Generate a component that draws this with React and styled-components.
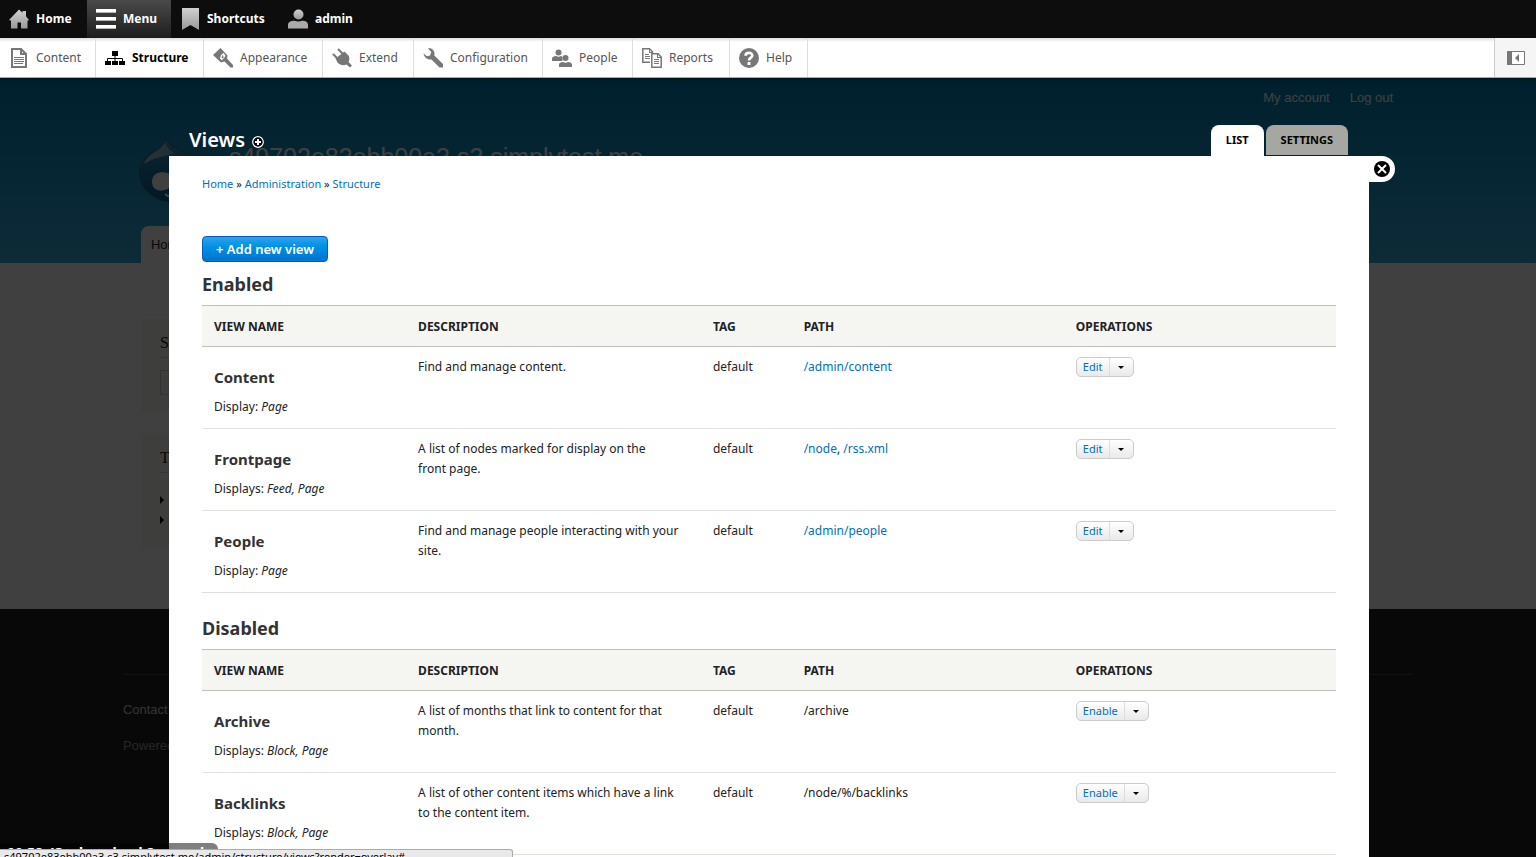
import React from "react";
import styled, { createGlobalStyle } from "styled-components";

const GlobalStyle = createGlobalStyle`
  * {
    box-sizing: border-box;
  }
  body {
    margin: 0;
    overflow: hidden;
    font-family: "Noto Sans", "Open Sans", sans-serif;
    font-size: 12px;
    color: #222;
  }
  a {
    color: #0071b3;
    text-decoration: none;
  }
  h1, h2, h3, p, ul {
    margin: 0;
    padding: 0;
  }
  button {
    font-family: inherit;
    cursor: pointer;
  }
`;

const enabledViews = [
  { name: "Content", label: "Display:", displays: "Page", description: "Find and manage content.", paths: ["/admin/content"] },
  { name: "Frontpage", label: "Displays:", displays: "Feed, Page", description: "A list of nodes marked for display on the front\u00a0page.", paths: ["/node", "/rss.xml"] },
  { name: "People", label: "Display:", displays: "Page", description: "Find and manage people interacting with your site.", paths: ["/admin/people"] },
];

const disabledViews = [
  { name: "Archive", label: "Displays:", displays: "Block, Page", description: "A list of months that link to content for that month.", text: "/archive" },
  { name: "Backlinks", label: "Displays:", displays: "Block, Page", description: "A list of other content items which have a link to the content item.", text: "/node/%/backlinks" },
];

const bar = [
  { label: "Home", icon: HomeIcon, width: 87 },
  { label: "Menu", icon: MenuIcon, width: 84, active: true },
  { label: "Shortcuts", icon: BookmarkIcon, width: 108 },
  { label: "admin", icon: UserIcon, width: 90 },
];

const tray = [
  { label: "Content", icon: ContentIcon, width: 96 },
  { label: "Structure", icon: StructureIcon, width: 108, active: true },
  { label: "Appearance", icon: BrushIcon, width: 119 },
  { label: "Extend", icon: PlugIcon, width: 91 },
  { label: "Configuration", icon: WrenchIcon, width: 129 },
  { label: "People", icon: PeopleIcon, width: 90 },
  { label: "Reports", icon: ReportsIcon, width: 97 },
  { label: "Help", icon: HelpIcon, width: 78 },
];

function HomeIcon() {
  return (
    <svg width="20" height="20" viewBox="0 0 20 20">
      <path fill="url(#barGrey)" d="M10 0.5 L13.5 3.8 V2 H17 V7.2 L20 11 L18.5 11.8 V19.5 H12 V13.5 H8.5 V19.5 H2 V11.8 L0 11 Z" />
    </svg>
  );
}

function MenuIcon() {
  return (
    <svg width="20" height="20" viewBox="0 0 20 20">
      <path fill="#fff" d="M0 0h20v4H0zM0 8h20v4H0zM0 16h20v4H0z" />
      <path fill="#b5b5b5" d="M0 3h20v1H0zM0 11h20v1H0zM0 19h20v1H0z" />
    </svg>
  );
}

function BookmarkIcon() {
  return (
    <svg width="20" height="22" viewBox="0 0 20 22">
      <path fill="url(#barGrey)" d="M2 0H19V22L10.500 17L2 22Z" />
    </svg>
  );
}

function UserIcon() {
  return (
    <svg width="20" height="20" viewBox="0 0 20 20">
      <circle fill="url(#barGrey)" cx="10.500" cy="5.500" r="5" />
      <path fill="#aaa" d="M0 19.500V16C0 13 3 11.800 6.500 11.800C9 12.800 12 12.800 14 11.800C17.500 11.800 20 13 20 16V19.500Z" />
    </svg>
  );
}

function ContentIcon() {
  return (
    <svg width="20" height="20" viewBox="0 0 20 20">
      <path fill="none" stroke="#777" strokeWidth="2" d="M3 1H12L17 6V19H3Z" />
      <path fill="#777" d="M11 1h2v4h4v2h-6zM5 9h10v1H5zM5 11h10v1H5zM5 13h10v1H5zM5 15h9v1H5z" />
    </svg>
  );
}

function StructureIcon() {
  return (
    <svg width="20" height="20" viewBox="0 0 20 20">
      <path fill="#000" d="M7 3h6v5H7zM0 13h6v4H0zM7 13h6v4H7zM14 13h6v4h-6z" />
      <path fill="none" stroke="#000" d="M10 8V13M2.500 13V10.500H17.500V13" />
    </svg>
  );
}

function BrushIcon() {
  return (
    <svg width="20" height="20" viewBox="0 0 20 20">
      <path fill="#777" d="M0 7L7.500 0L14.500 7.500L14 10.500L20 17V19.500H17.500L11.500 13.500L8 14.500Z" />
      <path fill="#fff" d="M7 10.500L8 7L10.500 5L12.500 7.500L11.500 9.500L8.800 12.200Z" />
      <path fill="#777" d="M8.500 9.500L10 6.500L10.500 9.500L9.500 10.500Z" />
    </svg>
  );
}

function PlugIcon() {
  return (
    <svg width="20" height="20" viewBox="0 0 20 20">
      <path fill="#777" d="M3.500 10.500L12.500 3.500L16.500 7.500C17.800 9.500 17.500 12 16.500 14L20 17.500L18 19.500L14.500 16.500C11 18 8 17 5.500 14.500Z" />
      <path stroke="#777" strokeWidth="2" strokeLinecap="round" d="M6.500 1.500L12 7M1.500 6.500L7 12" />
    </svg>
  );
}

function WrenchIcon() {
  return (
    <svg width="20" height="20" viewBox="0 0 20 20">
      <path fill="#777" d="M5 0.500C8 -0.200 11.500 2 11.500 5.500L11.300 7.500L20 16V19.500H16.500L8.500 11.500C5 12 1 9.500 0.500 5.500L4 8.300L7 7.500L8.300 4Z" />
    </svg>
  );
}

function PeopleIcon() {
  return (
    <svg width="20" height="20" viewBox="0 0 20 20">
      <circle fill="#777" cx="6.500" cy="4.500" r="3" />
      <path fill="#777" d="M0 13V10.500C0 9 2 8.200 4 8C6 9 7.500 9 9 8L10.500 9V13Z" />
      <circle fill="#777" cx="13.500" cy="10" r="3" />
      <path fill="#777" d="M7 19V16.500C7 15 9 14.200 11 14C13 15 14.500 15 16 14C18 14.200 20 15 20 16.500V19Z" />
    </svg>
  );
}

function ReportsIcon() {
  return (
    <svg width="20" height="20" viewBox="0 0 20 20">
      <path fill="none" stroke="#777" strokeWidth="1.500" d="M8 14.200H0.800V0.800H7.500L11.200 4.500" />
      <path fill="#777" d="M7 1h1v3h3v1H7zM3 6h4v1H3zM3 8h5v1H3zM3 10h5v1H3z" />
      <path fill="#fff" stroke="#777" strokeWidth="1.500" d="M9.800 5.800H16L19.200 9V19.200H9.800Z" />
      <path fill="#777" d="M15 6h1v3h3v1h-4zM12 11h5v1h-5zM12 13h5v1h-5zM12 15h5v1h-5z" />
    </svg>
  );
}

function HelpIcon() {
  return (
    <svg width="20" height="20" viewBox="0 0 20 20">
      <circle fill="#777" cx="10" cy="10" r="10" />
      <path fill="none" stroke="#fff" strokeWidth="2.600" d="M6.500 7.800C6.500 4 13.300 4 13.300 7.500C13.300 9.800 10 9.500 10 12.500" />
      <path fill="#fff" d="M8.500 14h3v3h-3z" />
    </svg>
  );
}

function Druplicon() {
  return (
    <svg width="64" height="73" viewBox="0 0 64 73">
      <defs>
        <linearGradient id="drop" x1="0" y1="0" x2="0" y2="1">
          <stop offset="0" stopColor="#4a9cc4" />
          <stop offset="0.500" stopColor="#1a78aa" />
          <stop offset="1" stopColor="#0a6090" />
        </linearGradient>
        <linearGradient id="shine" x1="1" y1="0" x2="0" y2="1">
          <stop offset="0" stopColor="#fff" stopOpacity="0.300" />
          <stop offset="1" stopColor="#fff" stopOpacity="0.600" />
        </linearGradient>
      </defs>
      <path fill="url(#drop)" stroke="#2a6c90" d="M27 1C30 11 43 12 52 20C72 38 62 65 34 65C8 65 -8 40 5 22C12 13 24 12 27 1Z" />
      <path fill="url(#shine)" d="M26 5C29 13 32 14 36 16C26 20 14 20 5 27C9 16 23 14 26 5Z" />
      <path fill="#fff" d="M13 45C13 33 28 33 35 40C41 36 52 34 54 44C55 54 42 54 35 47C28 56 13 56 13 45Z" />
      <path fill="none" stroke="#fff" strokeWidth="2" d="M26 57Q34 64 44 57" />
    </svg>
  );
}

function ViewsTable({ caption, rows, operation }) {
  return (
    <Section>
      <SectionTitle>{caption}</SectionTitle>
      <Table aria-label={caption}>
        <colgroup>
          <Col $width={18} />
          <Col $width={26} />
          <Col $width={8} />
          <Col $width={24} />
          <Col $width={24} />
        </colgroup>
        <thead>
          <tr>
            <Th>View name</Th>
            <Th>Description</Th>
            <Th>Tag</Th>
            <Th>Path</Th>
            <Th>Operations</Th>
          </tr>
        </thead>
        <tbody>
          {rows.map((row) => (
            <tr key={row.name}>
              <Td>
                <ViewName>{row.name}</ViewName>
                <p>
                  {row.label} <em>{row.displays}</em>
                </p>
              </Td>
              <Td>{row.description}</Td>
              <Td>default</Td>
              <Td>
                {row.text}
                {row.paths && row.paths.map((path, i) => (
                  <React.Fragment key={path}>
                    {i > 0 && ", "}
                    <a href="#">{path}</a>
                  </React.Fragment>
                ))}
              </Td>
              <Td>
                <DropButton>
                  <DropAction>{operation}</DropAction>
                  <DropToggle aria-label="List additional actions">
                    <svg width="6" height="3" viewBox="0 0 6 3">
                      <path d="M0 0H6L3 3Z" />
                    </svg>
                  </DropToggle>
                </DropButton>
              </Td>
            </tr>
          ))}
        </tbody>
      </Table>
    </Section>
  );
}

function Site() {
  return (
    <SiteWrapper>
      <SiteHeader>
        <Container>
          <UserLinks>
            <a href="#">My account</a>
            <a href="#">Log out</a>
          </UserLinks>
          <Branding>
            <Druplicon />
            <SiteName>s49702e83ebb00a3.s3.simplytest.me</SiteName>
          </Branding>
          <SiteTab href="#">Home</SiteTab>
        </Container>
      </SiteHeader>
      <SiteMain>
        <Sidebar>
          <Block>
            <BlockTitle>Search</BlockTitle>
            <SearchInput aria-label="Search" />
          </Block>
          <Block $tall>
            <BlockTitle>Tools</BlockTitle>
            <ToolList>
              <li><Arrow /></li>
              <li><Arrow /></li>
            </ToolList>
          </Block>
        </Sidebar>
      </SiteMain>
      <SiteFooter>
        <FooterInner>
          <a href="#">Contact</a>
          <p>Powered by Drupal</p>
        </FooterInner>
      </SiteFooter>
    </SiteWrapper>
  );
}

function App() {
  return (
    <Page>
      <GlobalStyle />
      <Defs width="0" height="0">
        <defs>
          <linearGradient id="barGrey" x1="0" y1="0" x2="0" y2="1">
            <stop offset="0" stopColor="#d0d0d0" />
            <stop offset="1" stopColor="#999" />
          </linearGradient>
        </defs>
      </Defs>
      <Toolbar>
        <Bar>
          {bar.map(({ label, icon: Icon, width, active }) => (
            <BarItem key={label} href="#" $width={width} $active={active}>
              <Icon />
              {label}
            </BarItem>
          ))}
        </Bar>
        <Tray>
          {tray.map(({ label, icon: Icon, width, active }) => (
            <TrayItem key={label} href="#" $width={width} $active={active}>
              <Icon />
              {label}
            </TrayItem>
          ))}
          <Orientation aria-label="Vertical orientation">
            <svg width="18" height="14" viewBox="0 0 18 14">
              <path fill="#fff" stroke="#777" d="M0.500 0.500H17.500V13.500H0.500Z" />
              <path fill="#777" d="M0 0h5v14H0zM12 3v8L8 7z" />
            </svg>
          </Orientation>
        </Tray>
      </Toolbar>
      <Site />
      <Backdrop>
        <TitleBar>
          <Title>Views</Title>
          <AddShortcut aria-label="Add to shortcuts">
            <svg width="12" height="12" viewBox="0 0 12 12">
              <circle cx="6" cy="6" r="5.300" fill="#000" stroke="#fff" strokeWidth="1.200" />
              <path fill="#fff" d="M5 3h2v2h2v2H7v2H5V7H3V5h2z" />
            </svg>
          </AddShortcut>
          <Tabs>
            <Tab href="#" $active>List</Tab>
            <Tab href="#">Settings</Tab>
          </Tabs>
        </TitleBar>
        <Panel>
          <Close aria-label="Close overlay">
            <svg width="16" height="16" viewBox="0 0 16 16">
              <circle cx="8" cy="8" r="8" />
              <path stroke="#fff" strokeWidth="2" d="M4 4L12 12M12 4L4 12" />
            </svg>
          </Close>
          <Breadcrumb aria-label="Breadcrumb">
            <a href="#">Home</a> » <a href="#">Administration</a> » <a href="#">Structure</a>
          </Breadcrumb>
          <AddButton>+ Add new view</AddButton>
          <ViewsTable caption="Enabled" rows={enabledViews} operation="Edit" />
          <ViewsTable caption="Disabled" rows={disabledViews} operation="Enable" />
        </Panel>
      </Backdrop>
      <Clipped>00:58:43 · download Screenshot</Clipped>
      <StatusBar>s49702e83ebb00a3.s3.simplytest.me/admin/structure/views?render=overlay#</StatusBar>
    </Page>
  );
}

export default App;

const Page = styled.div`
  position: relative;
  height: 100vh;
  overflow: hidden;
  display: flex;
  flex-direction: column;
`;

const Defs = styled.svg`
  position: absolute;
`;

const Toolbar = styled.header`
  position: relative;
  z-index: 3;
  flex: none;
  box-shadow: 0 0 4px rgba(0, 0, 0, 0.8);
`;

const Bar = styled.nav`
  display: flex;
  height: 38px;
  background: #0d0d0d;
`;

const BarItem = styled.a`
  display: flex;
  align-items: center;
  gap: 7px;
  min-width: ${(props) => props.$width}px;
  padding: 0 0 2px 9px;
  font-size: 12px;
  font-weight: 700;
  color: #fff;
  background: ${(props) => (props.$active ? "linear-gradient(#4a4a4a, #1d1d1d)" : "none")};
  svg {
    margin-top: 2px;
  }
`;

const Tray = styled.nav`
  display: flex;
  height: 40px;
  background: linear-gradient(#ddd, #fff 4px);
  border-bottom: 1px solid #aaa;
`;

const TrayItem = styled.a`
  display: flex;
  align-items: center;
  gap: 7px;
  min-width: ${(props) => props.$width}px;
  padding-left: 9px;
  border-right: 1px solid #ddd;
  font-size: 12px;
  font-weight: ${(props) => (props.$active ? 700 : 400)};
  color: ${(props) => (props.$active ? "#000" : "#565656")};
`;

const Orientation = styled.button`
  display: flex;
  align-items: center;
  justify-content: center;
  width: 42px;
  margin-left: auto;
  padding: 0;
  border: 0;
  border-left: 1px solid #ccc;
  background: #f5f5f5;
`;

const SiteWrapper = styled.div`
  flex: 1;
  display: flex;
  flex-direction: column;
  font-family: "Liberation Sans", Arial, sans-serif;
  font-size: 13px;
  background: #fff;
`;

const SiteHeader = styled.div`
  height: 185px;
  background: linear-gradient(#007fb8, #38acdc);
`;

const Container = styled.div`
  display: flex;
  flex-direction: column;
  width: 84%;
  height: 100%;
  margin: 0 auto;
  padding: 0 18px;
`;

const UserLinks = styled.div`
  display: flex;
  justify-content: flex-end;
  gap: 20px;
  padding: 12px 2px 0;
  line-height: 15px;
  a {
    color: #fff;
  }
`;

const Branding = styled.div`
  display: flex;
  gap: 26px;
  margin: 32px 0 0 -2px;
`;

const SiteName = styled.div`
  font-size: 25px;
  line-height: 40px;
  color: #fff;
`;

const SiteTab = styled.a`
  align-self: flex-start;
  margin-top: auto;
  padding: 11px 10px;
  line-height: 15px;
  color: #222;
  background: #fff;
  border-radius: 8px 8px 0 0;
`;

const SiteMain = styled.div`
  width: 84%;
  height: 346px;
  margin: 0 auto;
  padding: 56px 18px 0;
`;

const Sidebar = styled.div`
  display: flex;
  flex-direction: column;
  gap: 22px;
  width: 240px;
`;

const Block = styled.div`
  height: ${(props) => (props.$tall ? 115 : 93)}px;
  padding: 15px 19px;
  background: #f6f6f2;
`;

const BlockTitle = styled.h2`
  padding-bottom: 5px;
  border-bottom: 1px solid #d6d6d6;
  font-family: "Liberation Serif", serif;
  font-size: 16px;
  font-weight: 400;
  line-height: 18px;
  color: #222;
`;

const SearchInput = styled.input`
  width: 160px;
  height: 25px;
  margin-top: 12px;
  border: 1px solid #ccc;
  background: #f6f6f2;
`;

const ToolList = styled.ul`
  list-style: none;
  padding-top: 17px;
  li {
    display: flex;
    align-items: center;
    height: 20px;
  }
`;

const Arrow = styled.span`
  border: 4px solid transparent;
  border-left: 4px solid #000;
  border-right: 0;
`;

const SiteFooter = styled.div`
  flex: 1;
  background: #202020;
`;

const FooterInner = styled.div`
  width: 84%;
  margin: 65px auto 0;
  padding-top: 26px;
  border-top: 1px solid #444;
  line-height: 18px;
  color: #999;
  a {
    display: block;
    margin-bottom: 18px;
    color: #ccc;
  }
`;

const Backdrop = styled.div`
  position: absolute;
  inset: 78px 0 0;
  z-index: 2;
  padding: 47px 167px 0 169px;
  background: rgba(0, 0, 0, 0.75);
`;

const TitleBar = styled.div`
  display: flex;
  align-items: center;
  height: 31px;
  padding: 0 21px 0 20px;
`;

const Title = styled.h1`
  font-size: 20px;
  font-weight: 600;
  line-height: 28px;
  padding-bottom: 2px;
  color: #fff;
`;

const AddShortcut = styled.button`
  display: flex;
  margin-left: 7px;
  padding: 2px 0 0;
  border: 0;
  background: none;
`;

const Tabs = styled.nav`
  display: flex;
  align-self: stretch;
  gap: 2px;
  margin-left: auto;
`;

const Tab = styled.a`
  height: ${(props) => (props.$active ? 31 : 30)}px;
  padding: 0 15px;
  border-radius: 8px 8px 0 0;
  font-size: 11px;
  font-weight: 700;
  line-height: 30px;
  text-transform: uppercase;
  color: #000;
  background: ${(props) => (props.$active ? "#fff" : "#a6a7a2")};
`;

const Panel = styled.main`
  position: relative;
  padding: 20px 33px;
  background: #fff;
`;

const Close = styled.button`
  position: absolute;
  top: 0;
  left: 100%;
  display: flex;
  align-items: center;
  width: 26px;
  height: 26px;
  padding: 0 0 0 5px;
  border: 0;
  border-radius: 0 13px 13px 0;
  background: #fff;
`;

const Breadcrumb = styled.nav`
  margin-bottom: 44px;
  font-size: 11px;
  line-height: 16px;
`;

const AddButton = styled.button`
  height: 26px;
  padding: 0 13px;
  border: 1px solid #0a5bc0;
  border-radius: 4px;
  font-size: 13px;
  font-weight: 600;
  color: #fff;
  background: linear-gradient(#2da3ee, #0091e2 40%, #0074d1);
`;

const Section = styled.section`
  margin-bottom: 13px;
`;

const SectionTitle = styled.h2`
  padding: 9px 0 8px;
  font-size: 18px;
  font-weight: 700;
  line-height: 26px;
  color: #333;
`;

const Table = styled.table`
  width: 100%;
  table-layout: fixed;
  border-collapse: collapse;
  line-height: 20px;
`;

const Col = styled.col`
  width: ${(props) => props.$width}%;
`;

const Th = styled.th`
  height: 41px;
  padding: 2px 12px 0;
  border: solid #bebfb9;
  border-width: 1px 0;
  font-weight: 700;
  text-align: left;
  text-transform: uppercase;
  background: #f5f5f2;
`;

const Td = styled.td`
  height: 82px;
  padding: 10px 16px 10px 12px;
  border-bottom: 1px solid #e0e0dc;
  vertical-align: top;
`;

const ViewName = styled.h3`
  padding: 8px 0 7px;
  font-size: 15px;
  font-weight: 700;
  line-height: 25px;
  color: #333;
`;

const DropButton = styled.div`
  display: inline-flex;
  height: 20px;
  border: 1px solid #ccc;
  border-radius: 5px;
  background: linear-gradient(#fff, #e9e9e9);
`;

const DropAction = styled.button`
  padding: 0 6px;
  border: 0;
  font-size: 11px;
  line-height: 18px;
  color: #0071b3;
  background: none;
`;

const DropToggle = styled.button`
  display: flex;
  align-items: center;
  justify-content: center;
  width: 24px;
  padding: 0;
  border: 0;
  border-left: 1px solid #ddd;
  background: none;
`;

const StatusBar = styled.div`
  position: absolute;
  left: 0;
  bottom: 0;
  z-index: 5;
  width: 513px;
  height: 8px;
  padding-left: 4px;
  overflow: hidden;
  border: 1px solid #aaa;
  border-width: 1px 1px 0 0;
  border-radius: 0 3px 0 0;
  font-size: 11px;
  line-height: 14px;
  white-space: nowrap;
  color: #000;
  background: #e9e9e9;
`;

const Clipped = styled.div`
  position: absolute;
  left: 0;
  bottom: 0;
  z-index: 4;
  width: 218px;
  height: 14px;
  padding: 1px 7px;
  overflow: hidden;
  border-radius: 0 6px 0 0;
  font-size: 14px;
  font-weight: 700;
  line-height: 18px;
  white-space: nowrap;
  color: #fff;
  background: rgba(0, 0, 0, 0.5);
`;
